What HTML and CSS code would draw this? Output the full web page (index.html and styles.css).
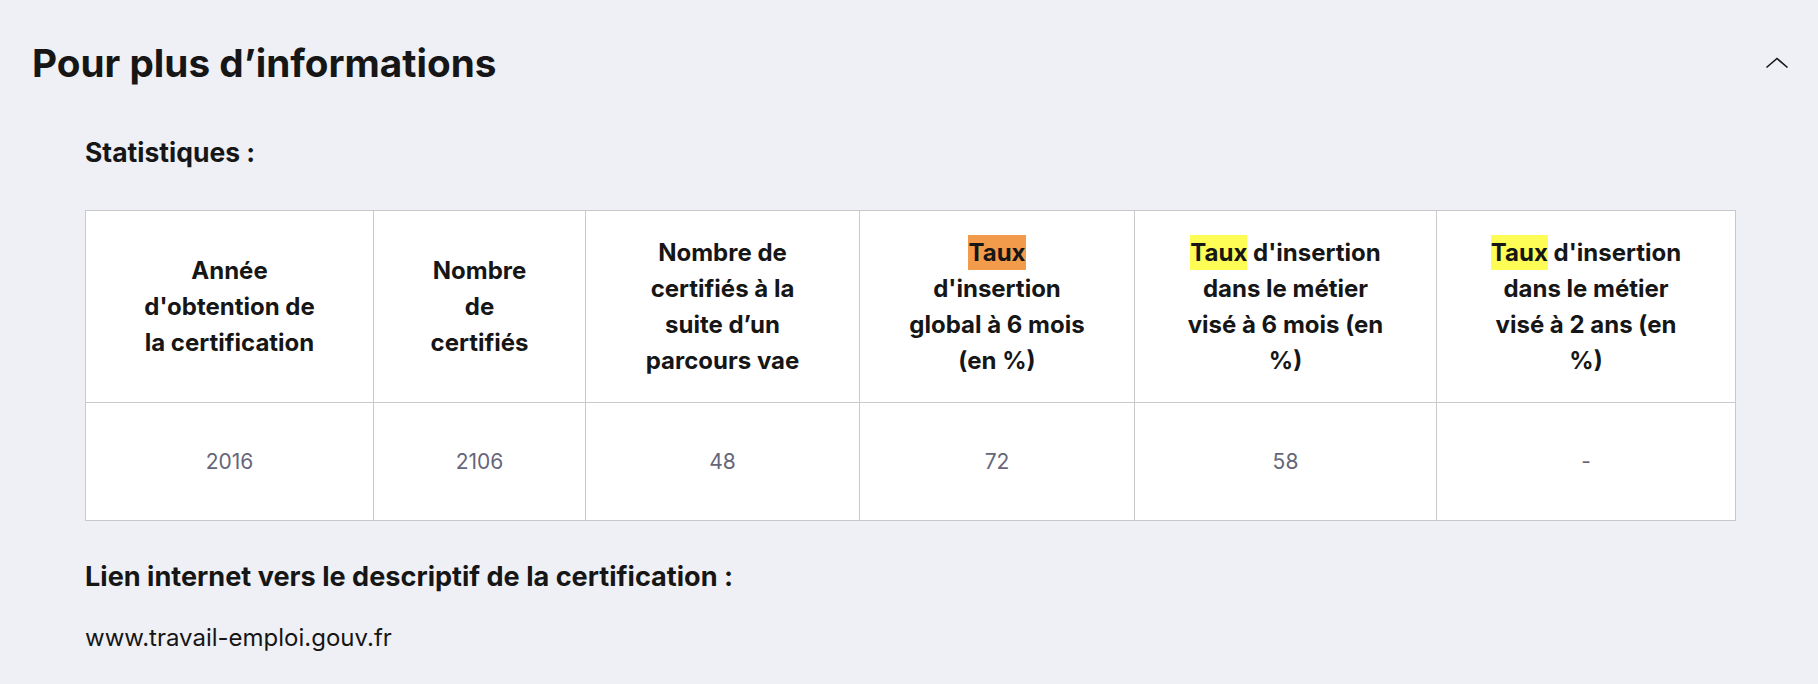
FILE: index.html
```html
<!DOCTYPE html>
<html lang="fr">
<head>
<meta charset="utf-8">
<title>Pour plus d’informations</title>
<link rel="stylesheet" href="styles.css">
</head>
<body>
<section class="accordion">
  <div class="accordion-header">
    <h2 class="accordion-title">Pour plus d’informations</h2>
    <button class="accordion-toggle" aria-expanded="true" aria-label="Replier">
      <svg width="24" height="12" viewBox="0 0 24 12" aria-hidden="true"><polyline points="1.5,10.5 12,1.5 22.5,10.5" fill="none" stroke="#161616" stroke-width="1.6"/></svg>
    </button>
  </div>
  <div class="accordion-body">
    <h3 class="section-label">Statistiques :</h3>
    <table class="stats">
      <colgroup>
        <col class="col-1"><col class="col-2"><col class="col-3"><col class="col-4"><col class="col-5"><col class="col-6">
      </colgroup>
      <thead>
        <tr>
          <th>Année d'obtention de la certification</th>
          <th>Nombre de certifiés</th>
          <th>Nombre de certifiés à la suite d’un parcours vae</th>
          <th><mark class="hl hl-orange">Taux</mark> d'insertion global à 6 mois (en %)</th>
          <th><mark class="hl">Taux</mark> d'insertion dans le métier visé à 6 mois (en %)</th>
          <th><mark class="hl">Taux</mark> d'insertion dans le métier visé à 2 ans (en %)</th>
        </tr>
      </thead>
      <tbody>
        <tr>
          <td>2016</td>
          <td>2106</td>
          <td>48</td>
          <td>72</td>
          <td>58</td>
          <td>-</td>
        </tr>
      </tbody>
    </table>
    <h3 class="section-label link-label">Lien internet vers le descriptif de la certification :</h3>
    <p class="link-text">www.travail-emploi.gouv.fr</p>
  </div>
</section>
</body>
</html>
```
FILE: styles.css
```css
* { box-sizing: border-box; }

body {
  margin: 0;
  background: #eff0f5;
  color: #161616;
  font-family: Inter, "Noto Sans", sans-serif;
}

.accordion {
  padding-top: 40px;
}

.accordion-header {
  display: flex;
  align-items: center;
  justify-content: space-between;
  padding: 0 30px 0 32px;
}

.accordion-title {
  margin: 0;
  font-size: 38.7px;
  line-height: 46px;
  font-weight: 700;
}

.accordion-toggle {
  display: flex;
  align-items: center;
  justify-content: center;
  width: 24px;
  height: 24px;
  padding: 0;
  margin-right: -1px;
  border: 0;
  background: none;
}

.accordion-body {
  padding: 50px 83px 0 85px;
}

.section-label {
  margin: 0;
  font-size: 26.5px;
  line-height: 32px;
  font-weight: 700;
}

.stats {
  width: 100%;
  margin-top: 42px;
  border-collapse: collapse;
  table-layout: fixed;
  background: #fff;
}

.col-1 { width: 288px; }
.col-2 { width: 212px; }
.col-3 { width: 274px; }
.col-4 { width: 275px; }
.col-5 { width: 302px; }
.col-6 { width: 299px; }

.stats th,
.stats td {
  border: 1px solid #c9c9cc;
  text-align: center;
  vertical-align: middle;
}

.stats th {
  padding: 24px 48px 23px;
  font-size: 24px;
  line-height: 36px;
  font-weight: 700;
}

.stats td {
  padding: 42px 16px;
  font-size: 21px;
  line-height: 33px;
  color: #66667a;
}

.hl {
  background: #fdfd55;
  color: inherit;
  padding: 3px 0;
}

.hl-orange {
  background: #f29b4b;
}

.link-label {
  margin-top: 40px;
  font-size: 27.1px;
}

.link-text {
  margin: 27px 0 0;
  font-size: 24px;
  line-height: 36px;
}
```
